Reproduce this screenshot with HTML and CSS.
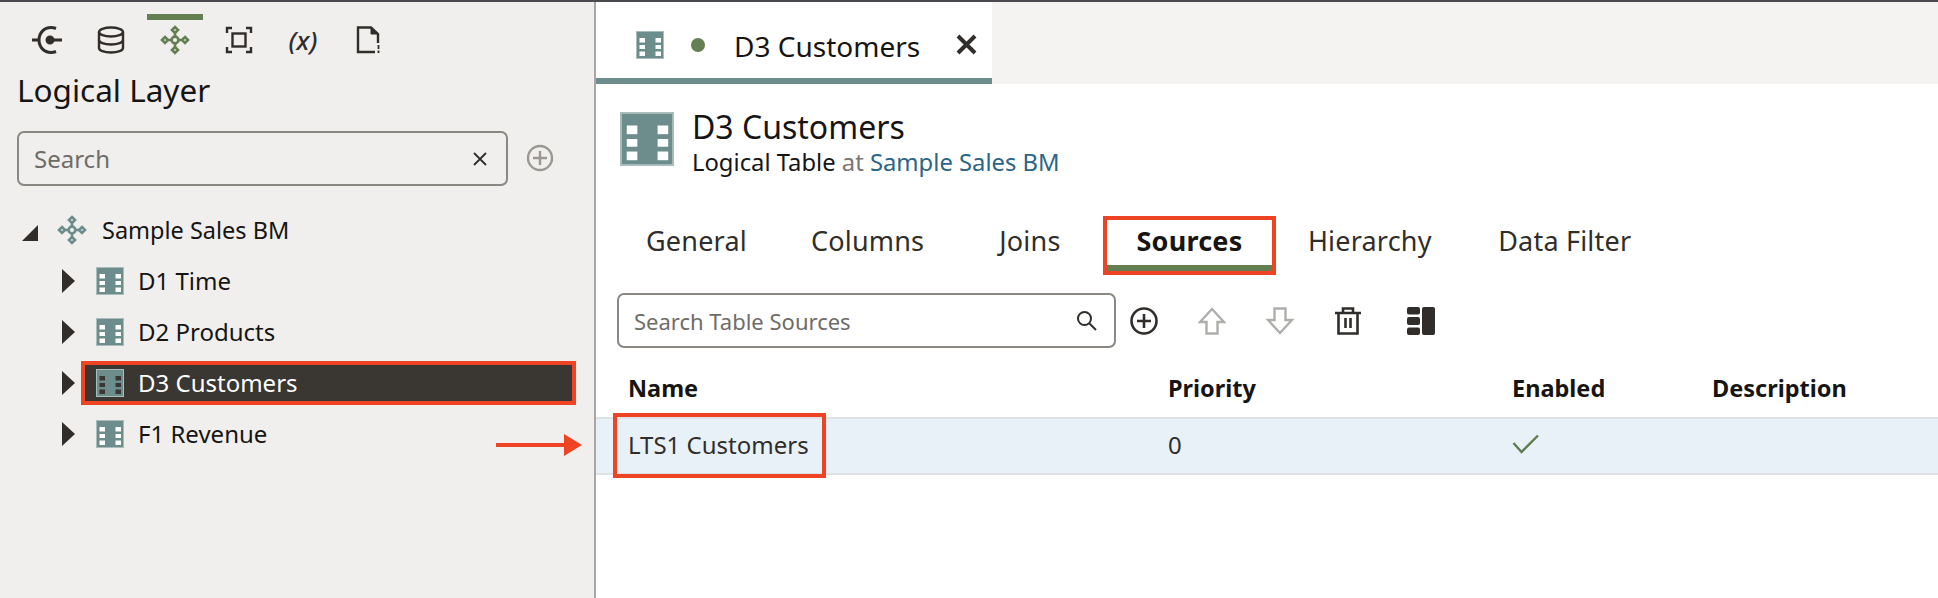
FILE: index.html

```html
<!DOCTYPE html>
<html lang="en">
<head>
  <meta charset="UTF-8" />
  <title>Logical Layer - D3 Customers</title>
  <link rel="stylesheet" href="styles.css">
</head>
<body>

  <svg class="defs" width="0" height="0">
    <symbol id="table-icon" viewBox="0 0 28 28">
      <rect x="0.5" y="0.5" width="27" height="27" fill="#6c8d8b" stroke="#a9bdbc"/>
      <g fill="currentColor">
        <rect x="3.5" y="7" width="5.5" height="4.500"/>
        <rect x="19.5" y="7" width="5.5" height="4.500"/>
        <rect x="3.5" y="14" width="5.5" height="4"/>
        <rect x="19.5" y="14" width="5.5" height="4"/>
        <rect x="3.5" y="20.500" width="5.5" height="4.500"/>
        <rect x="19.5" y="20.500" width="5.5" height="4.500"/>
      </g>
    </symbol>
    <symbol id="model-icon" viewBox="0 0 30 30">
      <g fill="none" stroke="currentColor" stroke-width="2.6">
        <path d="M15 7V11M15 19V23M7 15H11M19 15H23"/>
        <circle cx="15" cy="15" r="3.4"/>
        <path d="M15 2L18 5L15 8L12 5Z"/>
        <path d="M15 22L18 25L15 28L12 25Z"/>
        <path d="M5 12L8 15L5 18L2 15Z"/>
        <path d="M25 12L28 15L25 18L22 15Z"/>
      </g>
    </symbol>
  </svg>

  <div class="topline"></div>

  <div class="app">
    <aside class="sidebar">
      <nav class="rail">
        <span class="rail-item">
          <svg width="32" height="28" viewBox="0 0 32 28" fill="none" stroke="#312d2a" stroke-width="3">
            <path d="M25 2.5C23 1.7 21.5 1.5 20 1.5C13 1.5 8 7 8 14C8 21 13 26.5 20 26.5C21.5 26.5 23 26.300 25 25.500"/>
            <path d="M1 14H8M19 14H31"/>
            <circle cx="19" cy="14" r="3" fill="#312d2a"/>
          </svg>
        </span>
        <span class="rail-item">
          <svg width="28" height="28" viewBox="0 0 28 28" fill="none" stroke="#312d2a" stroke-width="2.4">
            <ellipse cx="14" cy="6" rx="12" ry="4.500"/>
            <path d="M2 6V22C2 24.500 7 26.500 14 26.500C21 26.500 26 24.500 26 22V6"/>
            <path d="M2 14C2 16.500 7 18.500 14 18.500C21 18.500 26 16.500 26 14"/>
          </svg>
        </span>
        <span class="rail-item active">
          <svg class="model-green" width="30" height="30"><use href="#model-icon"/></svg>
        </span>
        <span class="rail-item">
          <svg width="28" height="28" viewBox="0 0 28 28" fill="none" stroke="#312d2a" stroke-width="2.4">
            <path d="M7 2H2V7M21 2H26V7M7 26H2V21M21 26H26V21"/>
            <rect x="7.500" y="7.500" width="13" height="13"/>
          </svg>
        </span>
        <span class="rail-item var-icon">(x)</span>
        <span class="rail-item">
          <svg width="28" height="28" viewBox="0 0 28 28" fill="none" stroke="#312d2a" stroke-width="2.400">
            <path d="M25 17V8L18 1.500H5V26H22"/>
            <path d="M18 2V8H25" fill="#312d2a" stroke-width="1"/>
            <path d="M25.500 19V23M25.500 24.500V27" stroke-width="1.800"/>
          </svg>
        </span>
      </nav>

      <h2 class="side-title">Logical Layer</h2>

      <div class="side-search">
        <div class="search-box">
          <span class="placeholder">Search</span>
          <svg width="16" height="16" viewBox="0 0 16 16" fill="none" stroke="#312d2a" stroke-width="1.800">
            <path d="M2 2L14 14M14 2L2 14"/>
          </svg>
        </div>
        <svg class="side-add" width="28" height="28" viewBox="0 0 28 28" fill="none" stroke="#9b9894" stroke-width="2.400">
          <circle cx="14" cy="14" r="12"/>
          <path d="M14 7V21M7 14H21"/>
        </svg>
      </div>

      <ul class="tree">
        <li class="tree-row root">
          <span class="tri-open"></span>
          <svg class="model-teal" width="30" height="30"><use href="#model-icon"/></svg>
          <span>Sample Sales BM</span>
        </li>
        <li class="tree-row">
          <span class="tri"></span>
          <span class="node">
            <svg class="tbl" width="28" height="28"><use href="#table-icon"/></svg>
            <span>D1 Time</span>
          </span>
        </li>
        <li class="tree-row">
          <span class="tri"></span>
          <span class="node">
            <svg class="tbl" width="28" height="28"><use href="#table-icon"/></svg>
            <span>D2 Products</span>
          </span>
        </li>
        <li class="tree-row">
          <span class="tri"></span>
          <span class="node selected">
            <svg class="tbl" width="28" height="28"><use href="#table-icon"/></svg>
            <span>D3 Customers</span>
          </span>
        </li>
        <li class="tree-row">
          <span class="tri"></span>
          <span class="node">
            <svg class="tbl" width="28" height="28"><use href="#table-icon"/></svg>
            <span>F1 Revenue</span>
          </span>
        </li>
      </ul>
    </aside>

    <main class="content">
      <div class="tabstrip">
        <div class="doc-tab">
          <svg class="tbl" width="28" height="28"><use href="#table-icon"/></svg>
          <span class="dot"></span>
          <span class="doc-name">D3 Customers</span>
          <svg class="doc-close" width="21" height="21" viewBox="0 0 21 21" fill="none" stroke="#312d2a" stroke-width="4">
            <path d="M2 2L19 19M19 2L2 19"/>
          </svg>
        </div>
      </div>

      <div class="head">
        <svg class="tbl" width="54" height="54"><use href="#table-icon"/></svg>
        <div>
          <h1>D3 Customers</h1>
          <p>Logical Table <span class="at">at</span> <span class="link">Sample Sales BM</span></p>
        </div>
      </div>

      <div class="tabs">
        <span class="tab">General</span>
        <span class="tab">Columns</span>
        <span class="tab joins">Joins</span>
        <span class="tab current">Sources</span>
        <span class="tab">Hierarchy</span>
        <span class="tab last">Data Filter</span>
      </div>

      <div class="toolbar">
        <div class="table-search">
          <span class="placeholder">Search Table Sources</span>
          <svg width="21" height="21" viewBox="0 0 21 21" fill="none" stroke="#312d2a" stroke-width="2">
            <circle cx="8.500" cy="8.500" r="6.500"/>
            <path d="M13.500 13.500L20 20"/>
          </svg>
        </div>
        <svg class="tool" width="28" height="28" viewBox="0 0 28 28" fill="none" stroke="#312d2a" stroke-width="2.600">
          <circle cx="14" cy="14" r="12.500"/>
          <path d="M14 7V21M7 14H21"/>
        </svg>
        <svg class="tool" width="28" height="28" viewBox="0 0 28 28" fill="none" stroke="#b0aeab" stroke-width="2.400">
          <path d="M14 2L26 15H19.500V26.500H8.500V15H2Z"/>
        </svg>
        <svg class="tool" width="28" height="28" viewBox="0 0 28 28" fill="none" stroke="#b0aeab" stroke-width="2.400">
          <path d="M14 26L26 13H19.500V1.500H8.500V13H2Z"/>
        </svg>
        <svg class="tool" width="28" height="28" viewBox="0 0 28 28" fill="none" stroke="#312d2a" stroke-width="2.600">
          <path d="M1 6H27M9 6V1.500H19V6M4.500 6V26.500H23.500V6"/>
          <path d="M11.500 11V21M16.500 11V21"/>
        </svg>
        <svg class="tool layout-tool" width="28" height="28" viewBox="0 0 28 28" fill="#312d2a">
          <rect x="0" y="0" width="13" height="7.500" rx="2"/>
          <rect x="0" y="10" width="13" height="8" rx="2"/>
          <rect x="0" y="20.500" width="13" height="7.500" rx="2"/>
          <rect x="15" y="0" width="13" height="28" rx="2"/>
        </svg>
      </div>

      <div class="grid grid-head">
        <span>Name</span>
        <span>Priority</span>
        <span>Enabled</span>
        <span>Description</span>
      </div>
      <div class="grid grid-row">
        <span class="name-cell">LTS1 Customers</span>
        <span>0</span>
        <span>
          <svg class="check" width="28" height="20" viewBox="0 0 28 20" fill="none" stroke="#5f7d4f" stroke-width="2.400">
            <path d="M1.500 9L9.500 18L26 1.500"/>
          </svg>
        </span>
        <span></span>
      </div>
    </main>
  </div>

  <svg class="arrow" width="86" height="22" viewBox="0 0 86 22">
    <path d="M0 9H68V0L86 11L68 22V13H0Z" fill="#ef4423"/>
  </svg>

</body>
</html>
```

FILE: styles.css

```css
body {
  font-family: "Noto Sans", "Open Sans", sans-serif;
  background: #ffffff;
  color: #161513;
  margin: 0;
  height: 598px;
  overflow: hidden;
  position: relative;
}

h1, h2, p, ul {
  margin: 0;
  padding: 0;
  font-weight: 400;
}

.defs {
  display: block;
  height: 0;
}

.topline {
  height: 2px;
  background: #4a4a4e;
}

.app {
  display: flex;
  height: 596px;
}

/* left panel */
.sidebar {
  width: 594px;
  flex: none;
  background: #f0efed;
  border-right: 2px solid #a9a7a4;
}

.rail {
  display: flex;
  gap: 8px;
  padding: 12px 0 0 19px;
}

.rail-item {
  width: 56px;
  height: 40px;
  border-top: 6px solid transparent;
  display: flex;
  align-items: center;
  justify-content: center;
}

.rail-item.active {
  border-top-color: #647f52;
}

.var-icon {
  font-style: italic;
  font-size: 26px;
  font-weight: 500;
  color: #312d2a;
}

.model-green {
  color: #647f52;
}

.model-teal {
  color: #6c8d8b;
}

.side-title {
  font-size: 31.5px;
  line-height: 40px;
  padding: 10px 0 0 17px;
}

.side-search {
  display: flex;
  align-items: center;
  gap: 18px;
  padding: 21px 0 0 17px;
}

.search-box {
  width: 491px;
  height: 55px;
  box-sizing: border-box;
  border: 2px solid #8b8782;
  border-radius: 7px;
  display: flex;
  align-items: center;
  justify-content: space-between;
  padding: 0 18px 0 15px;
}

.side-add {
  margin-top: -2px;
}

.placeholder {
  color: #6f6c68;
  font-size: 24px;
}

.tree {
  list-style: none;
  padding: 19px 0 0 22px;
}

.tree-row {
  height: 51px;
  display: flex;
  align-items: center;
  font-size: 24px;
  padding-left: 40px;
}

.tree-row.root {
  height: 50px;
  padding-left: 0;
  gap: 15px;
  font-size: 23.5px;
}

.tri-open {
  width: 0;
  height: 0;
  margin-top: 6px;
  margin-right: 4px;
  border-style: solid;
  border-width: 0 0 16px 16px;
  border-color: transparent transparent #312d2a transparent;
}

.tri {
  width: 0;
  height: 0;
  flex: none;
  border-style: solid;
  border-width: 12px 0 12px 13px;
  border-color: transparent transparent transparent #312d2a;
}

.node {
  flex: 1;
  display: flex;
  align-items: center;
  gap: 14px;
  height: 44px;
  margin-left: 6px;
  margin-right: 18px;
  padding-left: 15px;
  box-sizing: border-box;
}

.tbl {
  color: #ffffff;
  flex: none;
}

.node.selected {
  background: #3a3631;
  color: #ffffff;
  outline: 4px solid #ef4423;
  outline-offset: -4px;
}

.node.selected .tbl {
  color: #3a3631;
}

/* right panel */
.content {
  flex: 1;
  min-width: 0;
}

.tabstrip {
  height: 82px;
  background: #f4f3f1;
  display: flex;
}

.doc-tab {
  width: 396px;
  box-sizing: border-box;
  background: #ffffff;
  border-bottom: 6px solid #6c8d8b;
  display: flex;
  align-items: center;
  padding: 9px 0 0 40px;
}

.dot {
  width: 14px;
  height: 14px;
  border-radius: 50%;
  background: #647f52;
  margin-left: 27px;
}

.doc-name {
  font-size: 28px;
  margin-left: 29px;
  margin-right: 1px;
  padding-top: 2px;
}

.doc-close {
  margin-left: 35px;
}

.head {
  display: flex;
  align-items: flex-start;
  gap: 18px;
  padding: 23px 0 0 24px;
}

.head .tbl {
  margin-top: 5px;
}

.head h1 {
  font-size: 32px;
  line-height: 40px;
}

.head p {
  font-size: 23.8px;
  line-height: 30px;
}

.at {
  color: #7a7672;
}

.link {
  color: #2b6587;
}

.tabs {
  display: flex;
  padding: 39px 0 0 18px;
}

.tab {
  font-size: 27px;
  letter-spacing: 0.2px;
  color: #312d2a;
  height: 59px;
  box-sizing: border-box;
  padding: 0 28px;
  line-height: 42px;
  border: 4px solid transparent;
}

.tab.joins {
  margin-left: 11px;
  margin-right: 10.5px;
}

.tab.last {
  margin-left: 2.5px;
}

.tab.current {
  font-weight: 700;
  color: #161513;
  padding: 0 29.5px;
  border-color: #ef4423;
  box-shadow: inset 0 -6px 0 #647f52;
}

.toolbar {
  display: flex;
  align-items: center;
  padding: 18px 0 0 21px;
}

.table-search {
  width: 499px;
  height: 55px;
  box-sizing: border-box;
  border: 2px solid #8b8782;
  border-radius: 7px;
  display: flex;
  align-items: center;
  justify-content: space-between;
  padding: 0 17px 0 15px;
}

.table-search .placeholder {
  font-size: 22px;
}

.tool {
  margin-left: 40px;
}

.table-search + .tool {
  margin-left: 14px;
}

.tool.layout-tool {
  margin-left: 45px;
}

.grid {
  display: grid;
  grid-template-columns: 540px 344px 200px 1fr;
  padding-left: 32px;
  font-size: 24px;
}

.grid-head {
  font-weight: 700;
  height: 69px;
  align-items: center;
  padding-top: 10px;
  box-sizing: border-box;
  font-size: 23.5px;
}

.grid-row {
  height: 58px;
  align-items: center;
  padding-bottom: 4px;
  background: #e8f1f8;
  border-top: 2px solid #dfe2e5;
  border-bottom: 2px solid #dfe2e5;
  box-sizing: border-box;
  color: #312d2a;
}

.name-cell {
  position: relative;
}

/* red callout round the first cell */
.name-cell::after {
  content: "";
  position: absolute;
  left: -15px;
  top: 50%;
  margin-top: -31px;
  width: 213px;
  height: 65px;
  box-sizing: border-box;
  border: 4px solid #ef4423;
}

.check {
  display: block;
}

.arrow {
  position: absolute;
  left: 496px;
  top: 434px;
}
```
